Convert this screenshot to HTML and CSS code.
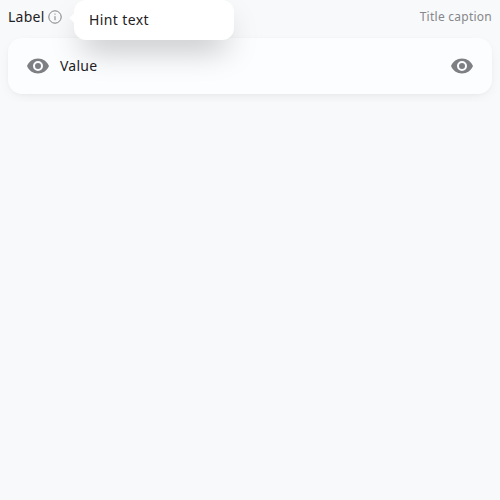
FILE: index.html
```html
<!DOCTYPE html>
<html lang="en">
<head>
<meta charset="utf-8">
<title>Field</title>
<link rel="stylesheet" href="styles.css">
</head>
<body>
<main class="field">
  <header class="field-header">
    <span class="label">Label</span>
    <span class="hint">
      <svg class="info" viewBox="0 0 16 16" fill="none" stroke="#808184">
        <circle cx="8" cy="8" r="6.2"/>
        <path d="M8 7.2v4M8 4.6v1.1"/>
      </svg>
      <span class="tooltip"><svg class="arrow" viewBox="0 0 6 20"><path d="M6 0C6 5 4.500 6.500 1 9Q0 10 1 11C4.500 13.500 6 15 6 20Z" fill="#fff"/></svg><span class="hint-text">Hint text</span></span>
    </span>
    <span class="caption">Title caption</span>
  </header>
  <div class="control">
    <svg class="eye" viewBox="0 0 24 24"><path fill="#7d7f82" fill-rule="evenodd" d="M12 4.500C7 4.500 2.730 7.610 1 12c1.730 4.390 6 7.500 11 7.500s9.270-3.110 11-7.500C21.270 7.610 17 4.500 12 4.500ZM12 17a5 5 0 1 1 0-10 5 5 0 0 1 0 10Zm0-8a3 3 0 1 0 0 6 3 3 0 0 0 0-6Z"/></svg>
    <span class="value">Value</span>
    <svg class="eye" viewBox="0 0 24 24"><path fill="#7d7f82" fill-rule="evenodd" d="M12 4.500C7 4.500 2.730 7.610 1 12c1.730 4.390 6 7.500 11 7.500s9.270-3.110 11-7.500C21.270 7.610 17 4.500 12 4.500ZM12 17a5 5 0 1 1 0-10 5 5 0 0 1 0 10Zm0-8a3 3 0 1 0 0 6 3 3 0 0 0 0-6Z"/></svg>
  </div>
</main>
</body>
</html>
```
FILE: styles.css
```css
body {
  margin: 0;
  background: #f8f9fb;
  color: #1f2225;
  font: 14px/18px "Noto Sans", sans-serif;
  letter-spacing: .25px;
}
.field {
  padding: 8px;
}
.field-header {
  display: flex;
  align-items: center;
  height: 18px;
  margin-bottom: 12px;
}
.label {
  width: 36px;
}
.hint {
  position: relative;
  display: flex;
  margin-left: 3px;
}
.info {
  width: 16px;
  height: 16px;
}
.tooltip {
  position: absolute;
  z-index: 1;
  left: 27px;
  top: -9px;
  box-sizing: border-box;
  width: 160px;
  height: 40px;
  padding: 11px 15px;
  border-radius: 12px;
  background: #fff;
  box-shadow: 0 16px 32px -8px rgba(0, 0, 0, .28);
}
.hint-text {
  letter-spacing: .4px;
}
.arrow {
  position: absolute;
  left: -5px;
  top: 8px;
  width: 6px;
  height: 20px;
}
.caption {
  margin-left: auto;
  color: #85878a;
  font-size: 12px;
}
.control {
  display: flex;
  align-items: center;
  box-sizing: border-box;
  height: 56px;
  padding: 0 18px;
  border-radius: 14px;
  background: #fcfdff;
  box-shadow: 0 4px 14px -4px rgba(8, 8, 8, .08), 0 1px 4px -1px rgba(0, 0, 0, .04);
}
.eye {
  width: 24px;
  height: 24px;
}
.value {
  flex: 1;
  margin-left: 10px;
}
```
